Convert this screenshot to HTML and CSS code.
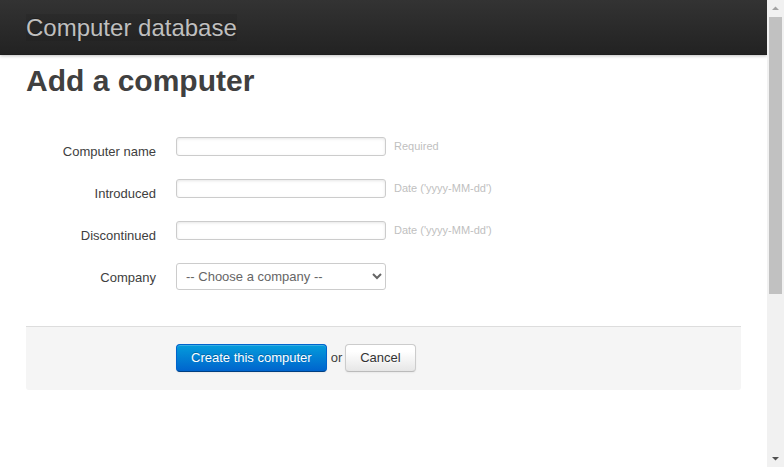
FILE: index.html
```html
<!DOCTYPE html>
<html lang="en">
<head>
<meta charset="utf-8">
<title>Computers database</title>
<link rel="stylesheet" href="styles.css">
</head>
<body>
<div class="viewport">
  <div class="page">
    <header class="topbar">
      <h1 class="fill"><a class="brand" href="#">Computer database</a></h1>
    </header>
    <section class="main">
      <h1 class="title">Add a computer</h1>
      <form class="form">
        <fieldset class="fields">
          <div class="row">
            <label class="label" for="name">Computer name</label>
            <div class="input"><input class="text" id="name" type="text"><span class="help-inline">Required</span></div>
          </div>
          <div class="row">
            <label class="label" for="introduced">Introduced</label>
            <div class="input"><input class="text" id="introduced" type="text"><span class="help-inline">Date ('yyyy-MM-dd')</span></div>
          </div>
          <div class="row">
            <label class="label" for="discontinued">Discontinued</label>
            <div class="input"><input class="text" id="discontinued" type="text"><span class="help-inline">Date ('yyyy-MM-dd')</span></div>
          </div>
          <div class="row">
            <label class="label" for="company">Company</label>
            <div class="input input-select"><select class="select" id="company"><option>-- Choose a company --</option></select></div>
          </div>
        </fieldset>
        <div class="actions">
          <button class="btn primary" type="button">Create this computer</button>
          <span class="or">or</span>
          <a class="btn" href="#">Cancel</a>
        </div>
      </form>
    </section>
  </div>
  <div class="scrollbar" aria-hidden="true">
    <div class="sb-button">
      <svg width="17" height="17" viewBox="0 0 17 17"><polygon points="5,10 12,10 8.5,6.5" fill="#a3a3a3"/></svg>
    </div>
    <div class="sb-track">
      <div class="sb-thumb"></div>
    </div>
    <div class="sb-button">
      <svg width="17" height="17" viewBox="0 0 17 17"><polygon points="5,7 12,7 8.5,10.5" fill="#505050"/></svg>
    </div>
  </div>
</div>
</body>
</html>
```
FILE: styles.css
```css
html, body {
  margin: 0;
  padding: 0;
  height: 100%;
  overflow: hidden;
}

body {
  font-family: "Liberation Sans", Helvetica, Arial, sans-serif;
  font-size: 13px;
  line-height: 18px;
  color: #404040;
  background: #fff;
}

.viewport {
  display: flex;
  height: 100%;
}

.page {
  flex: 1;
  min-width: 0;
  overflow: hidden;
}

/* fake browser scrollbar */
.scrollbar {
  width: 17px;
  flex: none;
  display: flex;
  flex-direction: column;
  background: #f1f1f1;
}

.sb-button {
  height: 17px;
  flex: none;
}

.sb-button svg {
  display: block;
}

.sb-track {
  flex: 1;
  padding: 0 2px;
  display: flex;
  flex-direction: column;
}

.sb-thumb {
  height: 277px;
  background: #c1c1c1;
}

.topbar {
  height: 55px;
  background-color: #222;
  background-image: linear-gradient(to bottom, #333333, #222222);
  box-shadow: 0 1px 3px rgba(0, 0, 0, 0.25), inset 0 -1px 0 rgba(0, 0, 0, 0.1);
  padding: 0 26px;
  box-sizing: border-box;
  position: relative;
}

.fill {
  margin: 0;
  padding-top: 14px;
  font-weight: normal;
  font-size: 24px;
  line-height: 27px;
}

.brand {
  display: inline-block;
  color: #bfbfbf;
  text-decoration: none;
  background: rgba(0, 0, 0, 0.07);
  text-shadow: 0 -1px 0 rgba(0, 0, 0, 0.25);
}

.main {
  padding: 0 26px;
}

.title {
  margin: 8px 0 0;
  font-size: 30px;
  line-height: 36px;
  font-weight: bold;
  color: #404040;
}

.form {
  margin: 0;
}

.fields {
  margin: 0;
  padding: 38px 0 0;
  border: 0;
  min-width: 0;
  display: flex;
  flex-direction: column;
  gap: 18px;
}

.row {
  display: flex;
  align-items: flex-start;
}

.label {
  width: 130px;
  flex: none;
  text-align: right;
  padding-top: 6px;
  line-height: 18px;
  font-size: 13px;
  color: #404040;
}

.input {
  margin-left: 20px;
  display: flex;
  align-items: center;
  height: 19px;
}

.input-select {
  height: 27px;
}

.text {
  box-sizing: border-box;
  width: 210px;
  height: 19px;
  margin: 0;
  padding: 0 4px;
  font-family: inherit;
  font-size: 13px;
  color: #808080;
  border: 1px solid #ccc;
  border-radius: 3px;
  box-shadow: inset 0 1px 3px rgba(0, 0, 0, 0.1);
  background: #fff;
  outline: none;
}

.help-inline {
  margin-left: 8px;
  font-size: 11px;
  line-height: 13px;
  color: #bfbfbf;
  white-space: nowrap;
}

.select {
  box-sizing: border-box;
  width: 210px;
  height: 27px;
  margin: 0;
  padding: 0 4px 0 5px;
  font-family: inherit;
  font-size: 13px;
  color: #666;
  border: 1px solid #ccc;
  border-radius: 3px;
  background-color: #fff;
}

.actions {
  margin-top: 36px;
  padding: 17px 20px 18px 150px;
  background: #f5f5f5;
  border-top: 1px solid #ddd;
  border-radius: 0 0 3px 3px;
  display: flex;
  align-items: center;
}

.or {
  margin: 0 3px 0 4px;
  color: #404040;
  font-size: 13px;
}

.btn {
  box-sizing: border-box;
  display: inline-block;
  height: 28px;
  padding: 5px 14px 6px;
  font-family: inherit;
  font-size: 13px;
  line-height: 15px;
  color: #333;
  text-decoration: none;
  background-color: #e6e6e6;
  background-image: linear-gradient(to bottom, #ffffff, #ffffff 25%, #e6e6e6);
  border: 1px solid #ccc;
  border-bottom-color: #bbb;
  border-radius: 4px;
  box-shadow: inset 0 1px 0 rgba(255, 255, 255, 0.2), 0 1px 2px rgba(0, 0, 0, 0.05);
  text-shadow: 0 1px 1px rgba(255, 255, 255, 0.75);
  cursor: pointer;
  margin: 0;
}

.btn.primary {
  color: #fff;
  background-color: #0064cd;
  background-image: linear-gradient(to bottom, #049cdb, #0064cd);
  border-color: #0064cd #0064cd #003f81;
  text-shadow: 0 -1px 0 rgba(0, 0, 0, 0.25);
}
```
